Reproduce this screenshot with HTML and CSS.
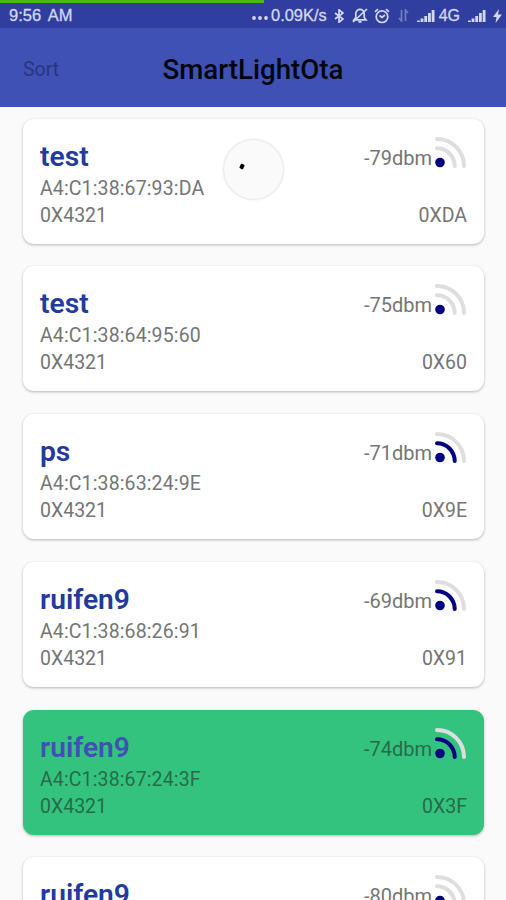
FILE: index.html
```html
<!DOCTYPE html>
<html lang="en">
<head>
  <meta charset="UTF-8">
  <title>SmartLightOta</title>
  <link rel="stylesheet" href="styles.css">
</head>
<body>

  <svg class="defs" width="0" height="0">
    <symbol id="rssi" viewBox="0 0 34 34">
      <circle class="dot" cx="7" cy="27.5" r="4.8"/>
      <path class="inner" d="M4 13.3A17.7 17.7 0 0 1 21.7 31"/>
      <path class="outer" d="M4 4A27 27 0 0 1 31 31"/>
    </symbol>
    <symbol id="bars" viewBox="0 0 18 12">
      <path d="M0 12V10.5H2.8V12zM3.6 12V8.5H6.4V12zM7.3 12V6H10.1V12zM11 12V3H13.8V12zM14.7 12V0H17.5V12z"/>
    </symbol>
  </svg>

  <div class="status-bar">
    <div class="progress"></div>
    <span class="time">9:56 AM</span>
    <div class="status-icons">
      <svg class="dots" width="16" height="4" viewBox="0 0 16 4">
        <circle cx="2" cy="2" r="1.9"/><circle cx="8" cy="2" r="1.9"/><circle cx="14" cy="2" r="1.9"/>
      </svg>
      <span class="speed">0.09K/s</span>
      <svg class="line bt" width="10" height="14" viewBox="0 0 10 14">
        <path d="M1 4L9 10L5 13.2V.8L9 4L1 10"/>
      </svg>
      <svg class="line bell" width="16" height="15" viewBox="0 0 16 15">
        <path d="M2 11.8H14L12.2 9.5V5.5A4.2 4.2 0 0 0 3.8 5.5V9.5zM6.5 13.8H9.5M1 14L15 1"/>
      </svg>
      <svg class="line alarm" width="16" height="16" viewBox="0 0 16 16">
        <circle cx="8" cy="8.7" r="5.8"/>
        <path d="M5.5 7.5L8 9.5L11 7M1 3.8L4 1.2M12 1.2L15 3.8"/>
      </svg>
      <svg class="line arrows" width="11" height="13" viewBox="0 0 11 13">
        <path d="M3.5 1V12L1 9M7.5 12V1L10 4"/>
      </svg>
      <svg class="bars" width="18" height="12"><use href="#bars"/></svg>
      <span class="net">4G</span>
      <svg class="bars" width="18" height="12"><use href="#bars"/></svg>
      <svg class="bolt" width="9" height="14" viewBox="0 0 9 14">
        <path d="M6 0L0 8H3.5L2.5 14L9 5.5H5z"/>
      </svg>
    </div>
  </div>

  <header>
    <span class="sort">Sort</span>
    <h1>SmartLightOta</h1>
  </header>

  <main class="devices">
    <div class="card level-1">
      <div class="row top">
        <h2>test</h2>
        <span class="signal">-79dbm<svg class="rssi"><use href="#rssi"/></svg></span>
      </div>
      <div class="row mac">A4:C1:38:67:93:DA</div>
      <div class="row"><span>0X4321</span><span>0XDA</span></div>
      <div class="spinner"><i></i></div>
    </div>

    <div class="card level-1">
      <div class="row top">
        <h2>test</h2>
        <span class="signal">-75dbm<svg class="rssi"><use href="#rssi"/></svg></span>
      </div>
      <div class="row mac">A4:C1:38:64:95:60</div>
      <div class="row"><span>0X4321</span><span>0X60</span></div>
    </div>

    <div class="card level-2">
      <div class="row top">
        <h2>ps</h2>
        <span class="signal">-71dbm<svg class="rssi"><use href="#rssi"/></svg></span>
      </div>
      <div class="row mac">A4:C1:38:63:24:9E</div>
      <div class="row"><span>0X4321</span><span>0X9E</span></div>
    </div>

    <div class="card level-2">
      <div class="row top">
        <h2>ruifen9</h2>
        <span class="signal">-69dbm<svg class="rssi"><use href="#rssi"/></svg></span>
      </div>
      <div class="row mac">A4:C1:38:68:26:91</div>
      <div class="row"><span>0X4321</span><span>0X91</span></div>
    </div>

    <div class="card level-2 selected">
      <div class="row top">
        <h2>ruifen9</h2>
        <span class="signal">-74dbm<svg class="rssi"><use href="#rssi"/></svg></span>
      </div>
      <div class="row mac">A4:C1:38:67:24:3F</div>
      <div class="row"><span>0X4321</span><span>0X3F</span></div>
    </div>

    <div class="card level-1">
      <div class="row top">
        <h2>ruifen9</h2>
        <span class="signal">-80dbm<svg class="rssi"><use href="#rssi"/></svg></span>
      </div>
    </div>
  </main>

</body>
</html>
```
FILE: styles.css
```css
* {
  box-sizing: border-box;
}

body {
  margin: 0;
  height: 900px;
  overflow: hidden;
  display: flex;
  flex-direction: column;
  font-family: Roboto, sans-serif;
  background: #fafafa;
  color: #757575;
}

svg {
  display: block;
  flex: none;
}

.defs {
  position: absolute;
}

.status-bar {
  position: relative;
  flex: none;
  height: 28px;
  padding: 3px 4px 0 9px;
  display: flex;
  justify-content: space-between;
  align-items: center;
  background: #303f9f;
  color: #d3d8f4;
  font-family: "Liberation Sans", sans-serif;
  font-size: 16px;
  -webkit-text-stroke: 0.3px #d3d8f4;
}

.progress {
  position: absolute;
  top: 0;
  left: 0;
  width: 264px;
  height: 3px;
  background: #43c007;
}

.time {
  font-size: 16.5px;
  word-spacing: 3px;
}

.status-icons {
  display: flex;
  align-items: center;
}

.status-icons svg {
  fill: #d3d8f4;
}

.status-icons .line {
  fill: none;
  stroke: #d3d8f4;
  stroke-width: 1.7;
}

.dots {
  margin: 5px 3px 0 0;
}

.speed {
  font-size: 16.4px;
}

.bt {
  margin-left: 7px;
}

.bell {
  margin-left: 8px;
}

.alarm {
  margin-left: 6px;
}

.status-icons .arrows {
  margin: 0 8px;
  opacity: 0.4;
}

.net {
  margin: 0 8px 0 4px;
}

.bolt {
  margin-left: 7px;
}

header {
  flex: none;
  height: 79px;
  padding: 3px 23px 0;
  display: grid;
  grid-template-columns: 60px 1fr 60px;
  align-items: center;
  background: #3f51b5;
}

.sort {
  font-size: 19.5px;
  color: #29357d;
}

h1 {
  margin: 0;
  font-size: 27.7px;
  font-weight: 500;
  text-align: center;
  color: #05060c;
}

.devices {
  padding: 11.6px 22px 0 23px;
  display: flex;
  flex-direction: column;
  gap: 22.75px;
}

.card {
  position: relative;
  flex: none;
  height: 125px;
  padding: 17px 17px 0;
  border-radius: 11px;
  background: #fff;
  box-shadow: 0 1px 3px rgba(0, 0, 0, 0.28);
  font-size: 19.5px;
}

.row {
  display: flex;
  justify-content: space-between;
  height: 27px;
  line-height: 27px;
}

.row.top {
  height: 39px;
}

.mac {
  letter-spacing: 0.13px;
}

h2 {
  margin: 0;
  line-height: 41px;
  font-size: 28.2px;
  font-weight: 600;
  color: #24399f;
}

.signal {
  display: flex;
  font-size: 20px;
  line-height: 45px;
}

.rssi {
  width: 34px;
  height: 34px;
  margin: -1px 0 0 1px;
  fill: none;
  stroke: #dedede;
  stroke-width: 4;
  stroke-linecap: round;
}

.dot {
  fill: #000080;
  stroke: none;
}

.level-2 .rssi {
  --inner: #000080;
}

.inner {
  stroke: var(--inner, #dedede);
}

.selected {
  background: #34c37e;
  color: #276b4a;
}

.selected h2 {
  color: #3f51b5;
}

.spinner {
  position: absolute;
  top: 21px;
  left: 201px;
  width: 59px;
  height: 59px;
  border-radius: 50%;
  background: #fafafa;
  box-shadow: 0 0 3px rgba(0, 0, 0, 0.22);
}

.spinner i {
  position: absolute;
  top: 24px;
  left: 16px;
  width: 4px;
  height: 5px;
  border-radius: 1px;
  background: #000;
  transform: rotate(25deg);
}
```
